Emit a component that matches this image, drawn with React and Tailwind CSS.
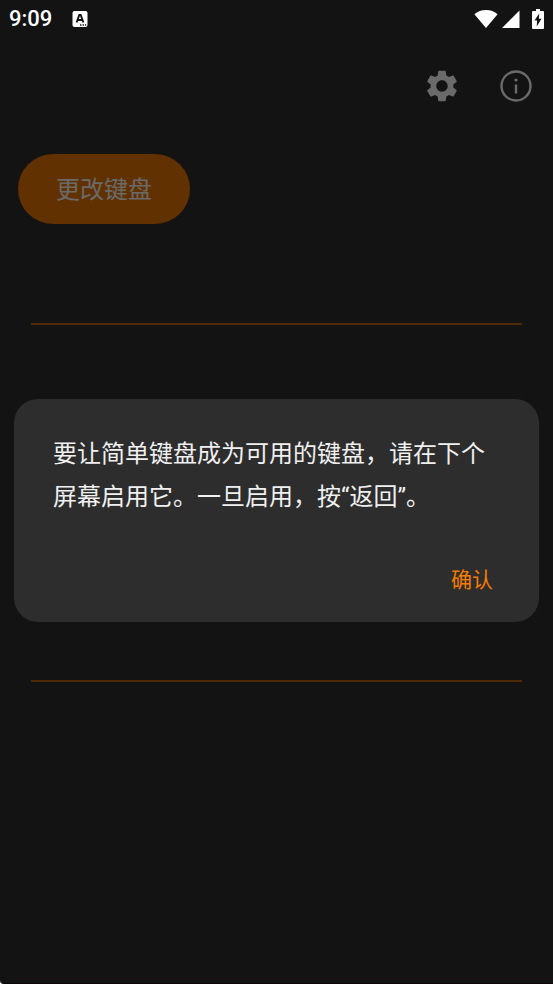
import React, { useState } from 'react';
import { MdSettings } from 'react-icons/md';

function StatusBar() {
  return (
    <div className="flex h-[38px] items-center justify-between px-[9px] text-white">
      <div className="flex items-center gap-5">
        <span className="text-[22px] leading-6 font-medium">9:09</span>
        <svg className="h-4 w-4" viewBox="0 0 16 16" fill="none">
          <rect x="0.5" y="0" width="15" height="16" rx="2" fill="#fff" />
          <path d="M4.6 11.5 7.3 4h1.4l2.7 7.5M5.8 9h4.6" stroke="#131313" strokeWidth="1.9" />
          <path d="M8 14h1.4M10.6 14H12M13 14h1.2" stroke="#131313" strokeWidth="1.5" />
        </svg>
      </div>
      <div className="flex items-center">
        <svg className="mr-1 h-[18px] w-6" viewBox="0 0 24 18" fill="currentColor">
          <path d="M12 18 .4 4.2C3.4 1.5 7.4 0 12 0s8.6 1.5 11.6 4.2z" />
        </svg>
        <svg className="mr-3 h-[18px] w-[18px]" viewBox="0 0 18 18" fill="currentColor">
          <path d="M0 18 17.5.5V18z" />
        </svg>
        <svg className="h-5 w-3" viewBox="0 0 12 20" fill="currentColor">
          <path d="M4 0h4v2h3a1 1 0 0 1 1 1v16a1 1 0 0 1-1 1H1a1 1 0 0 1-1-1V3a1 1 0 0 1 1-1h3z" />
          <path d="M7.2 4.5 2.5 11.6h2.6L4.7 17.5l4.8-7.7H6.9z" fill="#131313" />
        </svg>
      </div>
    </div>
  );
}

function ConfirmDialog({ onConfirm }) {
  return (
    <div className="fixed inset-0 flex items-center justify-center px-3.5 pt-[37px]">
      <div role="dialog" aria-modal="true" aria-describedby="dialog-message" className="w-full rounded-3xl bg-[#2d2d2d] pt-[34px] pb-[18px]">
        <p id="dialog-message" className="pr-9 pl-[39px] text-[24px] leading-[43px] text-[#f0f0f0]">
          要让简单键盘成为可用的键盘，请在下个屏幕启用它。一旦启用，按“返回”。
        </p>
        <div className="mt-[37px] flex justify-end pr-[34px]">
          <button type="button" onClick={onConfirm} className="h-12 px-3 text-[21px] leading-6 text-[#f57c00]">
            确认
          </button>
        </div>
      </div>
    </div>
  );
}

export default function App() {
  const [showDialog, setShowDialog] = useState(true);

  return (
    <div className="bg-white">
      <div className="flex min-h-screen flex-col rounded-bl-sm border-b border-[#0b0507] bg-[#131313] font-['Roboto','Noto_Sans_CJK_SC',sans-serif]">
        <StatusBar />

        <header className="flex h-24 items-center justify-end gap-[39px] pr-[21px] text-[#6a6a6a]">
          <button type="button" aria-label="设置">
            <MdSettings size={38} />
          </button>
          <button type="button" aria-label="关于">
            <svg className="h-8 w-8" viewBox="0 0 32 32" fill="none" stroke="currentColor">
              <circle cx="16" cy="16" r="14.5" strokeWidth="2.4" />
              <path d="M16 15.5v7" strokeWidth="2.4" strokeLinecap="round" />
              <circle cx="16" cy="10" r="1.6" fill="currentColor" stroke="none" />
            </svg>
          </button>
        </header>

        <main>
          <button
            type="button"
            onClick={() => setShowDialog(true)}
            className="mt-5 ml-[18px] h-[70px] rounded-full bg-[#613102] px-[38px] pt-0.5 text-[24px] leading-9 text-[#6a6a6a]"
          >
            更改键盘
          </button>

          <div className="px-[31px]">
            <input type="text" aria-label="测试输入" className="mt-9 block h-[65px] w-full border-b-2 border-[#502a06] bg-transparent text-[24px] text-[#6a6a6a] outline-none" />
            <textarea aria-label="测试多行输入" className="block h-[357px] w-full resize-none border-b-2 border-[#502a06] bg-transparent text-[24px] text-[#6a6a6a] outline-none" />
          </div>
        </main>

        {showDialog && <ConfirmDialog onConfirm={() => setShowDialog(false)} />}
      </div>
    </div>
  );
}
